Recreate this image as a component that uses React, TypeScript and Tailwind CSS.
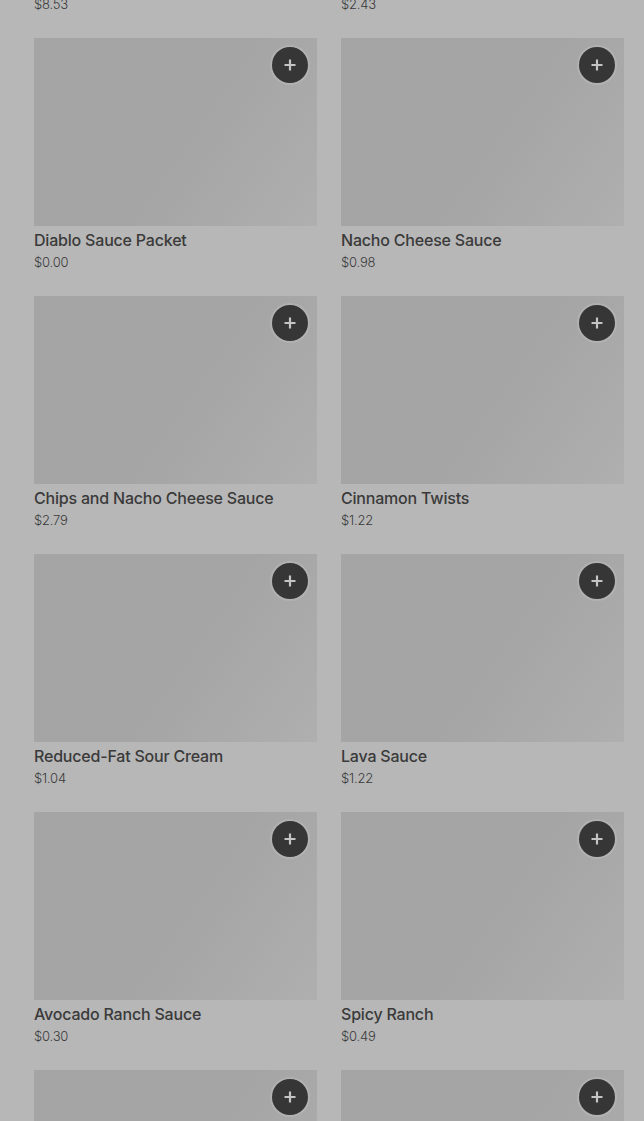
import React from "react";

type Item = { name: string; price: string };

const items: Item[] = [
  { name: "Beefy 5-Layer Burrito Box", price: "$8.53" },
  { name: "Fire Sauce Packet", price: "$2.43" },
  { name: "Diablo Sauce Packet", price: "$0.00" },
  { name: "Nacho Cheese Sauce", price: "$0.98" },
  { name: "Chips and Nacho Cheese Sauce", price: "$2.79" },
  { name: "Cinnamon Twists", price: "$1.22" },
  { name: "Reduced-Fat Sour Cream", price: "$1.04" },
  { name: "Lava Sauce", price: "$1.22" },
  { name: "Avocado Ranch Sauce", price: "$0.30" },
  { name: "Spicy Ranch", price: "$0.49" },
  { name: "Guacamole", price: "$1.49" },
  { name: "Creamy Jalapeño Sauce", price: "$0.49" },
];

function Card({ item }: { item: Item }) {
  return (
    <div className="flex flex-col">
      <div className="relative h-[188px] w-full bg-[linear-gradient(125deg,#a5a5a5_0%,#a5a5a5_55%,#afafaf_100%)]">
        <button className="absolute right-[9px] top-[9px] flex h-[36px] w-[36px] items-center justify-center rounded-full bg-[#363636] shadow-[0_0_0_2px_rgba(190,190,190,0.45)]">
          <svg width="14" height="14" viewBox="0 0 14 14">
            <path d="M7 1.5v11M1.5 7h11" stroke="#c4c4c4" strokeWidth="2.2" strokeLinecap="butt" />
          </svg>
        </button>
      </div>
      <div className="mt-[2px] text-[16px] font-medium leading-[24px] tracking-[-0.2px] text-[#3a3a3a]">{item.name}</div>
      <div className="text-[13px] font-light leading-[20px] tracking-[-0.2px] text-[#3a3a3a]">{item.price}</div>
    </div>
  );
}

export default function App() {
  return (
    <div
      className="h-[1121px] w-[644px] overflow-hidden bg-[#b7b7b7]"
      style={{ fontFamily: "Inter, 'Noto Sans', sans-serif" }}
    >
      <div className="ml-[34px] mr-[20px] mt-[-220px] grid grid-cols-2 gap-x-[24px] gap-y-[24px]">
        {items.map((it, i) => (
          <Card key={i} item={it} />
        ))}
      </div>
    </div>
  );
}
